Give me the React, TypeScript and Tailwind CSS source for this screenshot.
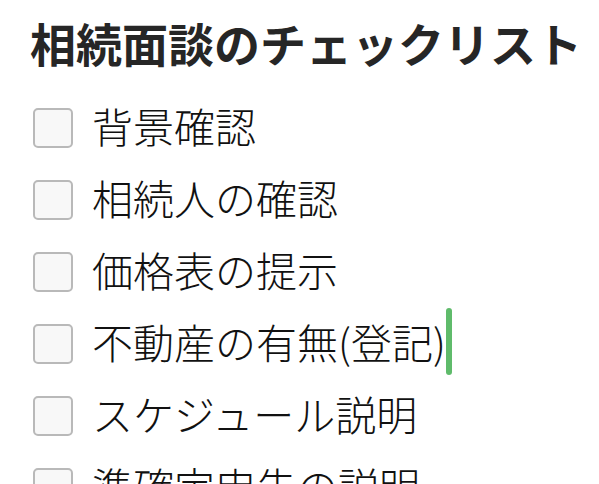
import React from "react";

const items = [
  "背景確認",
  "相続人の確認",
  "価格表の提示",
  "不動産の有無(登記)",
  "スケジュール説明",
  "準確定申告の説明",
];

export default function App() {
  return (
    <div
      className="w-[599px] h-[484px] overflow-hidden bg-white pl-[30px] pt-[14px]"
      style={{ fontFamily: '"Noto Sans CJK JP", "Noto Sans", sans-serif' }}
    >
      <h1 className="text-[46px] leading-[56px] font-bold text-[#262626] whitespace-nowrap">
        相続面談のチェックリスト
      </h1>
      <ul className="mt-[22px] flex flex-col">
        {items.map((t, i) => (
          <li key={i} className="h-[72px] flex items-center pl-[3px]">
            <span className="w-[40px] h-[40px] shrink-0 rounded-[5px] border-2 border-[#b9b9b9] bg-[#f8f8f8]" />
            <span className="ml-[19px] pb-[5px] text-[41px] leading-none font-light text-[#111111] whitespace-nowrap flex items-center">
              {t}
              {i === 3 && (
                <span className="inline-block w-[6px] h-[67px] rounded-[3px] bg-[#5fbb6b]" />
              )}
            </span>
          </li>
        ))}
      </ul>
    </div>
  );
}
